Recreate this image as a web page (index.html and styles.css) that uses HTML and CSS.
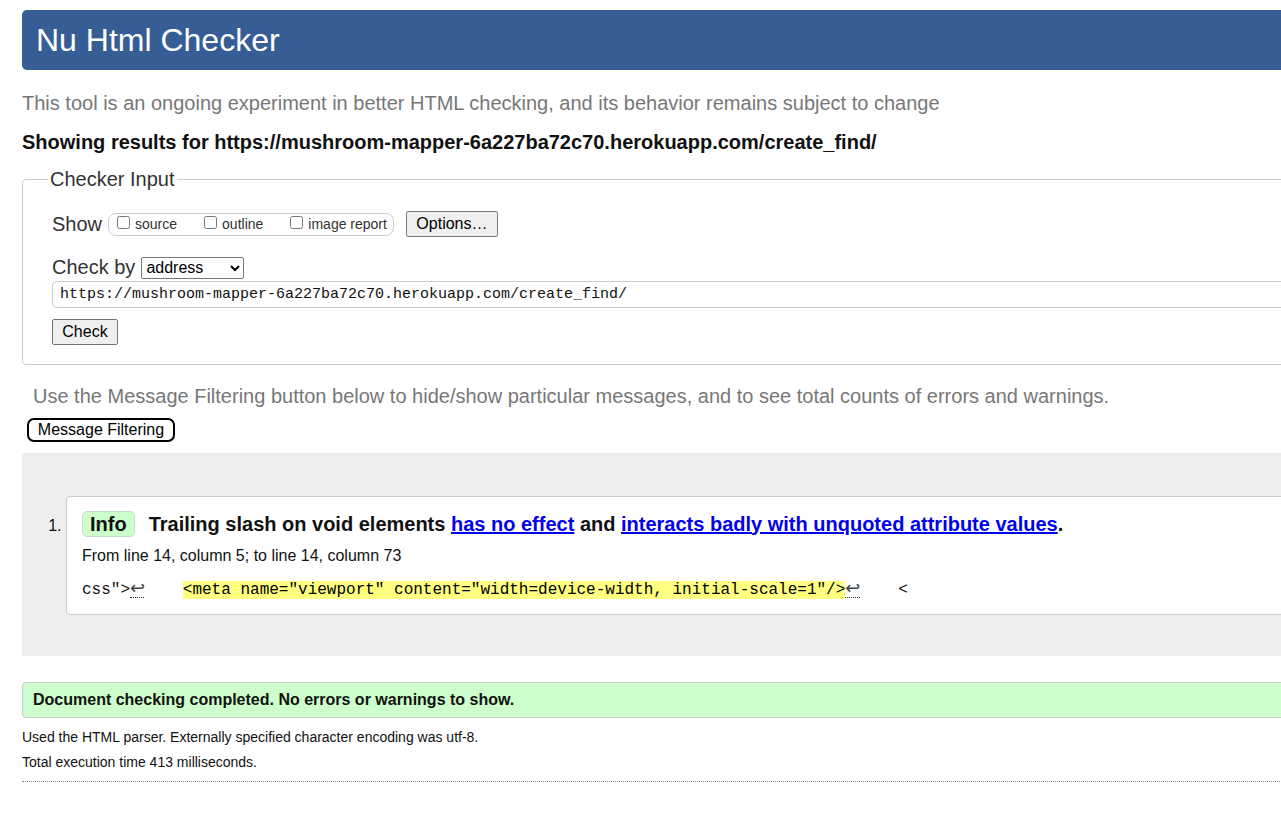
FILE: index.html
```html
<!DOCTYPE html>
<html lang="en">
<head>
<meta charset="utf-8">
<title>Showing results for https://mushroom-mapper-6a227ba72c70.herokuapp.com/create_find/ - Nu Html Checker</title>
<link rel="stylesheet" href="styles.css">
</head>
<body>
<div class="page">
  <h1 class="title">Nu Html Checker</h1>
  <p class="intro">This tool is an ongoing experiment in better HTML checking, and its behavior remains subject to change</p>
  <p class="showing">Showing results for https://mushroom-mapper-6a227ba72c70.herokuapp.com/create_find/</p>

  <fieldset class="checker">
    <legend class="legend">Checker Input</legend>
    <div class="row show-row">
      <span class="lbl">Show</span>
      <span class="opts">
        <label class="opt"><input type="checkbox" class="cb">source</label>
        <label class="opt"><input type="checkbox" class="cb">outline</label>
        <label class="opt"><input type="checkbox" class="cb">image report</label>
      </span>
      <button class="btn btn-options" type="button">Options…</button>
    </div>
    <div class="row by-row">
      <span class="lbl">Check by</span>
      <select class="sel"><option>address</option></select>
    </div>
    <input class="url" type="url" value="https://mushroom-mapper-6a227ba72c70.herokuapp.com/create_find/">
    <div class="row check-row">
      <button class="btn btn-check" type="submit">Check</button>
    </div>
  </fieldset>

  <p class="filter-note">Use the Message Filtering button below to hide/show particular messages, and to see total counts of errors and warnings.</p>
  <button class="btn-filter" type="button">Message Filtering</button>

  <div class="results">
    <ol class="msgs">
      <li class="msg">
        <p class="msg-line"><span class="badge">Info</span><span class="msg-text">Trailing slash on void elements <a href="#" class="lnk">has no effect</a> and <a href="#" class="lnk">interacts badly with unquoted attribute values</a>.</span></p>
        <p class="loc">From line 14, column 5; to line 14, column 73</p>
        <p class="extract"><code class="code">css"&gt;<b class="lf">↩</b>    <mark class="hl">&lt;meta name="viewport" content="width=device-width, initial-scale=1"/&gt;</mark><b class="lf">↩</b>    &lt;</code></p>
      </li>
    </ol>
  </div>

  <p class="success">Document checking completed. No errors or warnings to show.</p>
  <p class="details">Used the HTML parser. Externally specified character encoding was utf-8.</p>
  <p class="details details-time">Total execution time 413 milliseconds.</p>
  <hr class="rule">
</div>
</body>
</html>
```

FILE: styles.css
```css
html, body {
  margin: 0;
  padding: 0;
  overflow: hidden;
  background: #fff;
}

body {
  font-family: "Liberation Sans", Arial, sans-serif;
  color: #111;
}

.page {
  width: 1300px;
  padding: 10px 0 0 22px;
}

.title {
  margin: 0;
  height: 60px;
  line-height: 60px;
  padding: 0 14px;
  background: #365d95;
  color: #fff;
  font-size: 32px;
  font-weight: normal;
  border-radius: 5px;
}

.intro {
  margin: 21px 0 0;
  font-size: 20px;
  line-height: 24px;
  color: #777;
}

.showing {
  margin: 15px 0 0;
  font-size: 20px;
  line-height: 24px;
  font-weight: bold;
  color: #111;
}

.checker {
  margin: 13px 0 0;
  padding: 20px 29px 19px 29px;
  border: 1px solid #ccc;
  border-radius: 4px;
  min-width: 0;
}

.legend {
  font-size: 20px;
  line-height: 24px;
  color: #333;
  padding: 0 2px;
  margin-left: -4px;
}

.row {
  display: flex;
  align-items: center;
}

.show-row {
  height: 26px;
}

.lbl {
  font-size: 20px;
  color: #333;
  margin-right: 6px;
}

.opts {
  display: flex;
  align-items: center;
  height: 21px;
  padding: 0 6px 0 4px;
  border: 1px solid #ccc;
  border-radius: 8px;
}

.opt {
  display: flex;
  align-items: center;
  font-size: 14px;
  color: #333;
  margin-right: 23px;
}

.opt:last-child {
  margin-right: 0;
}

.cb {
  width: 13px;
  height: 13px;
  margin: 0 5px 4px 4px;
}

.btn {
  font-family: "Liberation Sans", Arial, sans-serif;
  font-size: 16px;
  color: #000;
  background: #efefef;
  border: 1px solid #767676;
  border-radius: 2px;
  height: 26px;
  padding: 0 9px;
}

.btn-options {
  margin-left: 12px;
  width: 92px;
}

.by-row {
  margin-top: 19px;
  height: 23px;
}

.sel {
  font-family: "Liberation Sans", Arial, sans-serif;
  font-size: 16px;
  color: #000;
  width: 103px;
  height: 22px;
  border: 1px solid #767676;
  border-radius: 2px;
  background: #fff;
}

.url {
  display: block;
  box-sizing: border-box;
  width: 1260px;
  height: 27px;
  margin: 2px 0 0 0;
  padding: 0 7px;
  border: 1px solid #ccc;
  border-radius: 5px;
  font-family: "Liberation Mono", "DejaVu Sans Mono", monospace;
  font-size: 15px;
  color: #111;
}

.check-row {
  margin-top: 11px;
}

.btn-check {
  width: 66px;
}

.filter-note {
  margin: 19px 0 0 11px;
  font-size: 20px;
  line-height: 24px;
  color: #777;
}

.btn-filter {
  display: block;
  margin: 10px 0 0 5px;
  height: 24px;
  width: 148px;
  padding: 0 7px;
  font-family: "Liberation Sans", Arial, sans-serif;
  font-size: 16px;
  color: #000;
  background: #fff;
  border: 2px solid #000;
  border-radius: 7px;
}

.results {
  margin-top: 11px;
  background: #eee;
  padding: 43px 0 41px 44px;
}

.msgs {
  margin: 0;
  padding: 0;
  font-size: 16px;
  color: #111;
}

.msg {
  background: #fff;
  border: 1px solid #ccc;
  border-radius: 4px 0 0 4px;
  padding: 13px 15px 12px;
}

.msg::marker {
  font-size: 16px;
}

.msg-line {
  margin: 0;
  height: 28px;
  display: flex;
  align-items: center;
  font-size: 20px;
  font-weight: bold;
}

.badge {
  display: inline-block;
  height: 24px;
  line-height: 24px;
  padding: 0 7px;
  background: #ccffcc;
  border: 1px solid #c4dcc4;
  border-radius: 5px;
  margin-right: 14px;
}

.lnk {
  color: #0000ee;
  text-decoration: underline;
}

.loc {
  margin: 6px 0 0;
  font-size: 16px;
  line-height: 24px;
}

.extract {
  margin: 9px 0 0;
  line-height: 24px;
}

.code {
  font-family: "Liberation Mono", "DejaVu Sans Mono", monospace;
  font-size: 16px;
  white-space: pre;
  color: #111;
}

.lf {
  display: inline-block;
  width: 14.4px;
  line-height: 18px;
  font-family: "DejaVu Sans", sans-serif;
  font-size: 18px;
  font-weight: normal;
  color: #444;
  border-bottom: 1px dotted #333;
}

.hl {
  background: #ffff80;
  color: #000;
}

.success {
  margin: 26px 0 0;
  height: 34px;
  line-height: 34px;
  padding: 0 10px;
  background: #ccffcc;
  border: 1px solid #ccc;
  border-radius: 4px 0 0 4px;
  font-size: 16px;
  font-weight: bold;
  color: #111;
}

.details {
  margin: 9px 0 0;
  font-size: 14px;
  line-height: 20px;
  color: #111;
}

.details-time {
  margin-top: 5px;
}

.rule {
  margin: 9px 0 0;
  border: 0;
  border-top: 1px dotted #888;
  height: 0;
}
```
